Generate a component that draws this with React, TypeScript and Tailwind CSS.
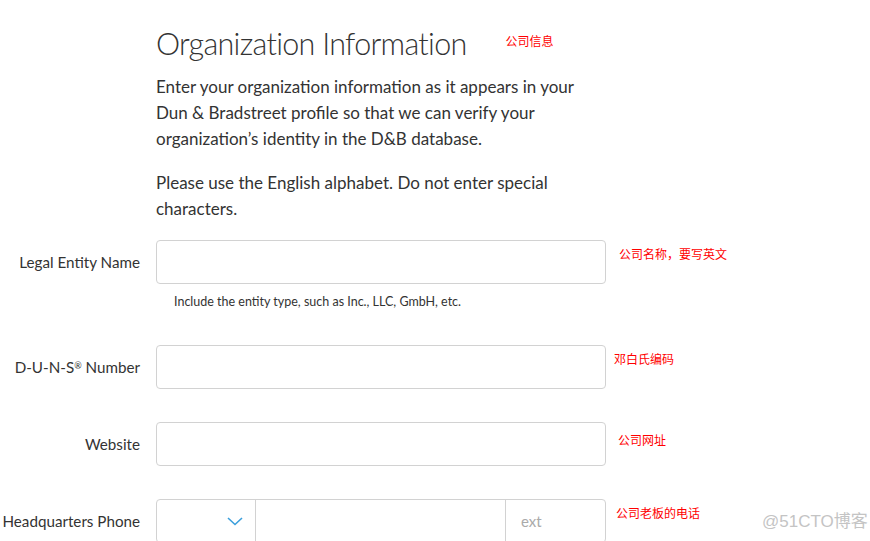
import React from "react";

const ann = "text-[12px] leading-[14px] text-[#ff0000] whitespace-nowrap";
const annFont = { fontFamily: '"Noto Sans CJK SC", sans-serif' };

function Label({ children }: { children: React.ReactNode }) {
  return (
    <div className="flex w-[140px] shrink-0 justify-end whitespace-nowrap text-[15.2px] text-[#333333]">
      <span>{children}</span>
    </div>
  );
}

export default function App() {
  return (
    <div
      className="relative h-[541px] w-[870px] overflow-hidden bg-white text-[#333333]"
      style={{ fontFamily: 'Lato, "Open Sans", sans-serif' }}
    >
      <div className="pl-[156px] pt-[22px]">
        <div className="flex items-center">
          <h1 className="text-[30.5px] font-light leading-[42px] tracking-[-0.7px] text-[#333333]">
            Organization Information
          </h1>
          <span className={`${ann} ml-[39px] -mt-[4px]`} style={annFont}>
            公司信息
          </span>
        </div>
        <p className="mt-[10px] w-[440px] text-[17px] leading-[26px]">
          Enter your organization information as it appears in your Dun &amp; Bradstreet profile so that we can verify
          your organization’s identity in the D&amp;B database.
        </p>
        <p className="mt-[18px] w-[420px] text-[17px] leading-[26px]">
          Please use the English alphabet. Do not enter special characters.
        </p>
      </div>

      <div className="mt-[18px] flex flex-col">
        {/* Legal entity */}
        <div className="flex items-start">
          <div className="flex h-[44px] items-center">
            <Label>Legal Entity Name</Label>
          </div>
          <div className="ml-[16px] flex flex-col">
            <div className="h-[44px] w-[450px] rounded-[4px] border border-[#d2d2d2] bg-white" />
            <div className="mt-[10px] pl-[18px] text-[12.5px] leading-[16px] text-[#333333]">
              Include the entity type, such as Inc., LLC, GmbH, etc.
            </div>
          </div>
          <span className={`${ann} ml-[13px] mt-[7px]`} style={annFont}>
            公司名称，要写英文
          </span>
        </div>

        {/* DUNS */}
        <div className="mt-[35px] flex items-start">
          <div className="flex h-[44px] items-center">
            <Label>
              D-U-N-S<span className="relative -top-[4px] text-[9px]">®</span> Number
            </Label>
          </div>
          <div className="ml-[16px] h-[44px] w-[450px] rounded-[4px] border border-[#d2d2d2] bg-white" />
          <span className={`${ann} ml-[8px] mt-[7px]`} style={annFont}>
            邓白氏编码
          </span>
        </div>

        {/* Website */}
        <div className="mt-[33px] flex items-start">
          <div className="flex h-[44px] items-center">
            <Label>Website</Label>
          </div>
          <div className="ml-[16px] h-[44px] w-[450px] rounded-[4px] border border-[#d2d2d2] bg-white" />
          <span className={`${ann} ml-[12px] mt-[11px]`} style={annFont}>
            公司网址
          </span>
        </div>

        {/* Phone */}
        <div className="mt-[33px] flex items-start">
          <div className="flex h-[44px] items-center">
            <Label>Headquarters Phone</Label>
          </div>
          <div className="ml-[16px] flex h-[44px] w-[450px] rounded-[4px] border border-[#d2d2d2] bg-white">
            <div className="flex w-[99px] items-center justify-end border-r border-[#d2d2d2] pr-[12px]">
              <svg width="16" height="9" viewBox="0 0 16 9" fill="none">
                <path d="M1 1l7 6.5L15 1" stroke="#3b9fdc" strokeWidth="1.6" />
              </svg>
            </div>
            <div className="w-[250px] border-r border-[#d2d2d2]" />
            <div className="flex flex-1 items-center pl-[15px] text-[15px] text-[#aaaaaa]">ext</div>
          </div>
          <span className={`${ann} ml-[10px] mt-[7px]`} style={annFont}>
            公司老板的电话
          </span>
        </div>
      </div>

      <div
        className="absolute left-[762px] top-[512px] whitespace-nowrap text-[17px] leading-[20px] text-[#c4c4c4]"
        style={{ fontFamily: '"Liberation Sans", "Noto Sans CJK SC", sans-serif' }}
      >
        @51CTO博客
      </div>
    </div>
  );
}
